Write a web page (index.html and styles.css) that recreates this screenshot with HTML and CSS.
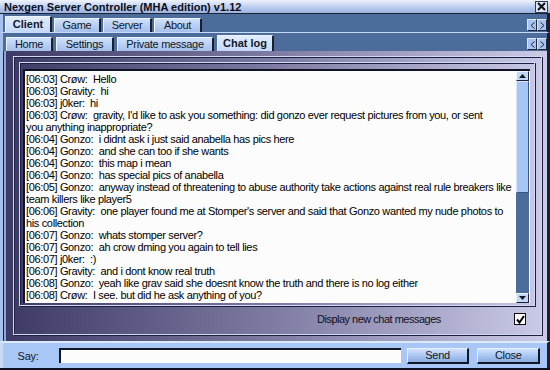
FILE: index.html
```html
<!DOCTYPE html>
<html lang="en">
<head>
  <meta charset="UTF-8">
  <title>Nexgen Server Controller</title>
  <link rel="stylesheet" href="styles.css">
</head>
<body>
  <div class="window">
    <div class="titlebar">
      <span class="title">Nexgen Server Controller (MHA edition) v1.12</span>
      <span class="close-x">
        <svg width="9" height="9" viewBox="0 0 9 9"><path d="M1 1L8 8M8 1L1 8" stroke="#101010" stroke-width="2"/></svg>
      </span>
    </div>

    <div class="tabrow main-tabs">
      <div class="tab active t-client">Client</div>
      <div class="tab t-game">Game</div>
      <div class="tab t-server">Server</div>
      <div class="tab t-about">About</div>
      <div class="tab-scroll">
        <span class="arrow"><svg width="5" height="7" viewBox="0 0 5 7"><path d="M4.5 0.5L1 3.5L4.5 6.5" fill="none" stroke="#202838"/></svg></span>
        <span class="arrow"><svg width="5" height="7" viewBox="0 0 5 7"><path d="M0.5 0.5L4 3.5L0.5 6.5" fill="none" stroke="#202838"/></svg></span>
      </div>
    </div>

    <div class="tabrow sub-tabs">
      <div class="tab t-home">Home</div>
      <div class="tab t-settings">Settings</div>
      <div class="tab t-private">Private message</div>
      <div class="tab active t-chat">Chat log</div>
      <div class="tab-scroll">
        <span class="arrow"><svg width="5" height="7" viewBox="0 0 5 7"><path d="M4.5 0.5L1 3.5L4.5 6.5" fill="none" stroke="#202838"/></svg></span>
        <span class="arrow"><svg width="5" height="7" viewBox="0 0 5 7"><path d="M0.5 0.5L4 3.5L0.5 6.5" fill="none" stroke="#202838"/></svg></span>
      </div>
    </div>

    <div class="panel">
      <div class="frame outer">
        <div class="frame inner">
          <div class="chatbox">
            <div class="chatlog">
              <div class="msg">[06:03] Crøw:  Hello</div>
              <div class="msg">[06:03] Gravity:  hi</div>
              <div class="msg">[06:03] j0ker:  hi</div>
              <div class="msg">[06:03] Crøw:  gravity, I'd like to ask you something: did gonzo ever request pictures from you, or sent<br>you anything inappropriate?</div>
              <div class="msg">[06:04] Gonzo:  i didnt ask i just said anabella has pics here</div>
              <div class="msg">[06:04] Gonzo:  and she can too if she wants</div>
              <div class="msg">[06:04] Gonzo:  this map i mean</div>
              <div class="msg">[06:04] Gonzo:  has special pics of anabella</div>
              <div class="msg">[06:05] Gonzo:  anyway instead of threatening to abuse authority take actions against real rule breakers like<br>team killers like player5</div>
              <div class="msg">[06:06] Gravity:  one player found me at Stomper's server and said that Gonzo wanted my nude photos to<br>his collection</div>
              <div class="msg">[06:07] Gonzo:  whats stomper server?</div>
              <div class="msg">[06:07] Gonzo:  ah crow dming you again to tell lies</div>
              <div class="msg">[06:07] j0ker:  :)</div>
              <div class="msg">[06:07] Gravity:  and i dont know real truth</div>
              <div class="msg">[06:08] Gonzo:  yeah like grav said she doesnt know the truth and there is no log either</div>
              <div class="msg">[06:08] Crøw:  I see. but did he ask anything of you?</div>
            </div>
            <div class="scrollbar">
              <span class="sb-btn"><svg width="7" height="4" viewBox="0 0 7 4"><path d="M0 4L3.5 0L7 4Z" fill="#101820"/></svg></span>
              <span class="sb-thumb"></span>
              <span class="sb-track"></span>
              <span class="sb-btn"><svg width="7" height="4" viewBox="0 0 7 4"><path d="M0 0L3.5 4L7 0Z" fill="#101820"/></svg></span>
            </div>
          </div>
        </div>
        <div class="option-row">
          <span class="option-label">Display new chat messages</span>
          <span class="checkbox">
            <svg width="9" height="9" viewBox="0 0 9 9"><path d="M1 4.5L3.5 7.5L8 1" fill="none" stroke="#000" stroke-width="2"/></svg>
          </span>
        </div>
      </div>
    </div>

    <div class="saybar">
      <span class="say-label">Say:</span>
      <input type="text" class="say-input">
      <button class="btn send">Send</button>
      <button class="btn close">Close</button>
    </div>
  </div>
</body>
</html>
```

FILE: styles.css
```css
body {
  margin: 0;
  width: 550px;
  height: 370px;
  overflow: hidden;
  background: #0c1020;
  font-family: "Liberation Sans", Arial, sans-serif;
  font-size: 11px;
  letter-spacing: -0.3px;
  color: #000;
}

.window {
  width: 550px;
  height: 368px;
  display: flex;
  flex-direction: column;
}

/* title bar */
.titlebar {
  height: 13px;
  flex: none;
  display: flex;
  align-items: center;
  justify-content: space-between;
  padding: 0 2px 0 4px;
  background: linear-gradient(#eef4fe, #bccdef 55%, #9cb2de);
  border-bottom: 1px solid #1a2236;
}

.title {
  font-weight: bold;
  font-size: 11px;
  letter-spacing: 0;
  color: #0a0e18;
}

.close-x {
  width: 11px;
  height: 10px;
  display: flex;
  align-items: center;
  justify-content: center;
  background: #dce6f8;
  border: 1px solid #303a50;
}

/* tab rows */
.tabrow {
  flex: none;
  display: flex;
  align-items: flex-end;
  background: #4c6c9c;
  border-left: 3px solid #a8c0ec;
  border-right: 3px solid #1a2030;
  position: relative;
}

.main-tabs {
  height: 18px;
  padding-left: 2px;
  gap: 2px;
}

.sub-tabs {
  height: 18px;
  padding-left: 3px;
  gap: 3px;
  border-top: 1px solid #c8daf8;
}

.tab {
  box-sizing: border-box;
  height: 14px;
  padding: 0;
  line-height: 13px;
  text-align: center;
  white-space: nowrap;
  background: linear-gradient(#cfe0fa, #a4c0ec);
  border-top: 1px solid #eef4ff;
  border-left: 1px solid #eef4ff;
  border-right: 2px solid #182030;
  color: #101828;
}

.tab.active {
  height: 16px;
  line-height: 15px;
  font-weight: bold;
  letter-spacing: 0;
  background: linear-gradient(#e2ecfc, #c4d8f8);
}

.t-client { width: 47px; }
.t-game { width: 47px; }
.t-server { width: 49px; }
.t-about { width: 48px; }

.t-home { width: 47px; }
.t-settings { width: 58px; }
.t-private { width: 97px; }
.t-chat { width: 57px; }

.tab-scroll {
  position: absolute;
  right: 0;
  top: 5px;
  display: flex;
}

.arrow {
  width: 8px;
  height: 10px;
  display: flex;
  align-items: center;
  justify-content: center;
  background: #a8c4ee;
  border: 1px solid #dce8fc;
  border-right-color: #202838;
  border-bottom-color: #202838;
}

/* main panel */
.panel {
  height: 290px;
  flex: none;
  box-sizing: border-box;
  padding: 5px 5px 6px 10px;
  background: linear-gradient(to right, #3c3a64, #7e7ca2 50%, #cbcbe8);
  border-left: 3px solid #a8c0ec;
  border-right: 3px solid #1a2030;
  box-shadow: inset 1px 0 0 #1c2440, inset 3px 0 0 #8aa6da;
}

.frame {
  box-sizing: border-box;
  border: 1px solid #d2d8f4;
  box-shadow: inset 1px 1px 0 #1c2040, 1px 1px 0 #1c2040;
}

.frame.outer {
  height: 279px;
  padding: 5px 6px 0 5px;
  display: flex;
  flex-direction: column;
}

.frame.inner {
  height: 244px;
  flex: none;
  padding: 6px 4px 2px 3px;
}

.chatbox {
  height: 100%;
  box-sizing: border-box;
  display: flex;
  background: #fcfcfc;
  border-top: 2px solid #0e1428;
  border-left: 2px solid #0e1428;
}

.chatlog {
  flex: 1;
  padding: 2px 0 0 1px;
  line-height: 12px;
  letter-spacing: -0.35px;
  overflow: hidden;
}

.msg {
  white-space: pre;
}

.scrollbar {
  width: 13px;
  flex: none;
  display: flex;
  flex-direction: column;
  margin-right: 1px;
  background: #4c6c9c;
}

.sb-btn {
  height: 10px;
  flex: none;
  display: flex;
  align-items: center;
  justify-content: center;
  background: #c4d6f6;
  border: 1px solid #eef4ff;
  border-right-color: #1a2234;
  border-bottom-color: #1a2234;
  box-sizing: border-box;
}

.sb-thumb {
  height: 112px;
  flex: none;
  background: #a6c6f6;
  border: 1px solid #d8e6fe;
  border-right-color: #3a5484;
  border-bottom-color: #3a5484;
  box-sizing: border-box;
}

.sb-track {
  flex: 1;
}

.option-row {
  flex: 1;
  display: flex;
  align-items: center;
  justify-content: space-between;
  padding: 0 9px 2px 298px;
}

.option-label {
  color: #101020;
  letter-spacing: -0.5px;
}

.checkbox {
  width: 10px;
  height: 10px;
  display: flex;
  align-items: center;
  justify-content: center;
  background: #fcfcfc;
  border: 1px solid #101010;
}

/* say bar */
.saybar {
  flex: 1;
  display: flex;
  align-items: center;
  gap: 6px;
  padding: 0 7px 0 0;
  background: #a8c6f6;
  border-top: 2px solid #dce8fc;
  border-left: 3px solid #c8daf8;
  border-right: 3px solid #1a2030;
}

.say-label {
  width: 50px;
  flex: none;
  text-align: center;
  color: #101828;
}

.say-input {
  width: 344px;
  height: 15px;
  box-sizing: border-box;
  margin: 0;
  padding: 0;
  background: #fcfcfc;
  border: none;
  border-top: 2px solid #101828;
  border-left: 2px solid #101828;
}

.btn {
  width: 63px;
  height: 16px;
  margin: 0;
  padding: 0;
  font-family: "Liberation Sans", Arial, sans-serif;
  font-size: 11px;
  letter-spacing: -0.3px;
  color: #101828;
  background: linear-gradient(#d0e2fc, #a4c2f0 60%, #8cacde);
  border: 1px solid #e8f0ff;
  border-right: 2px solid #101828;
  border-bottom: 2px solid #101828;
}

.btn.close {
  margin-left: 2px;
}
```
